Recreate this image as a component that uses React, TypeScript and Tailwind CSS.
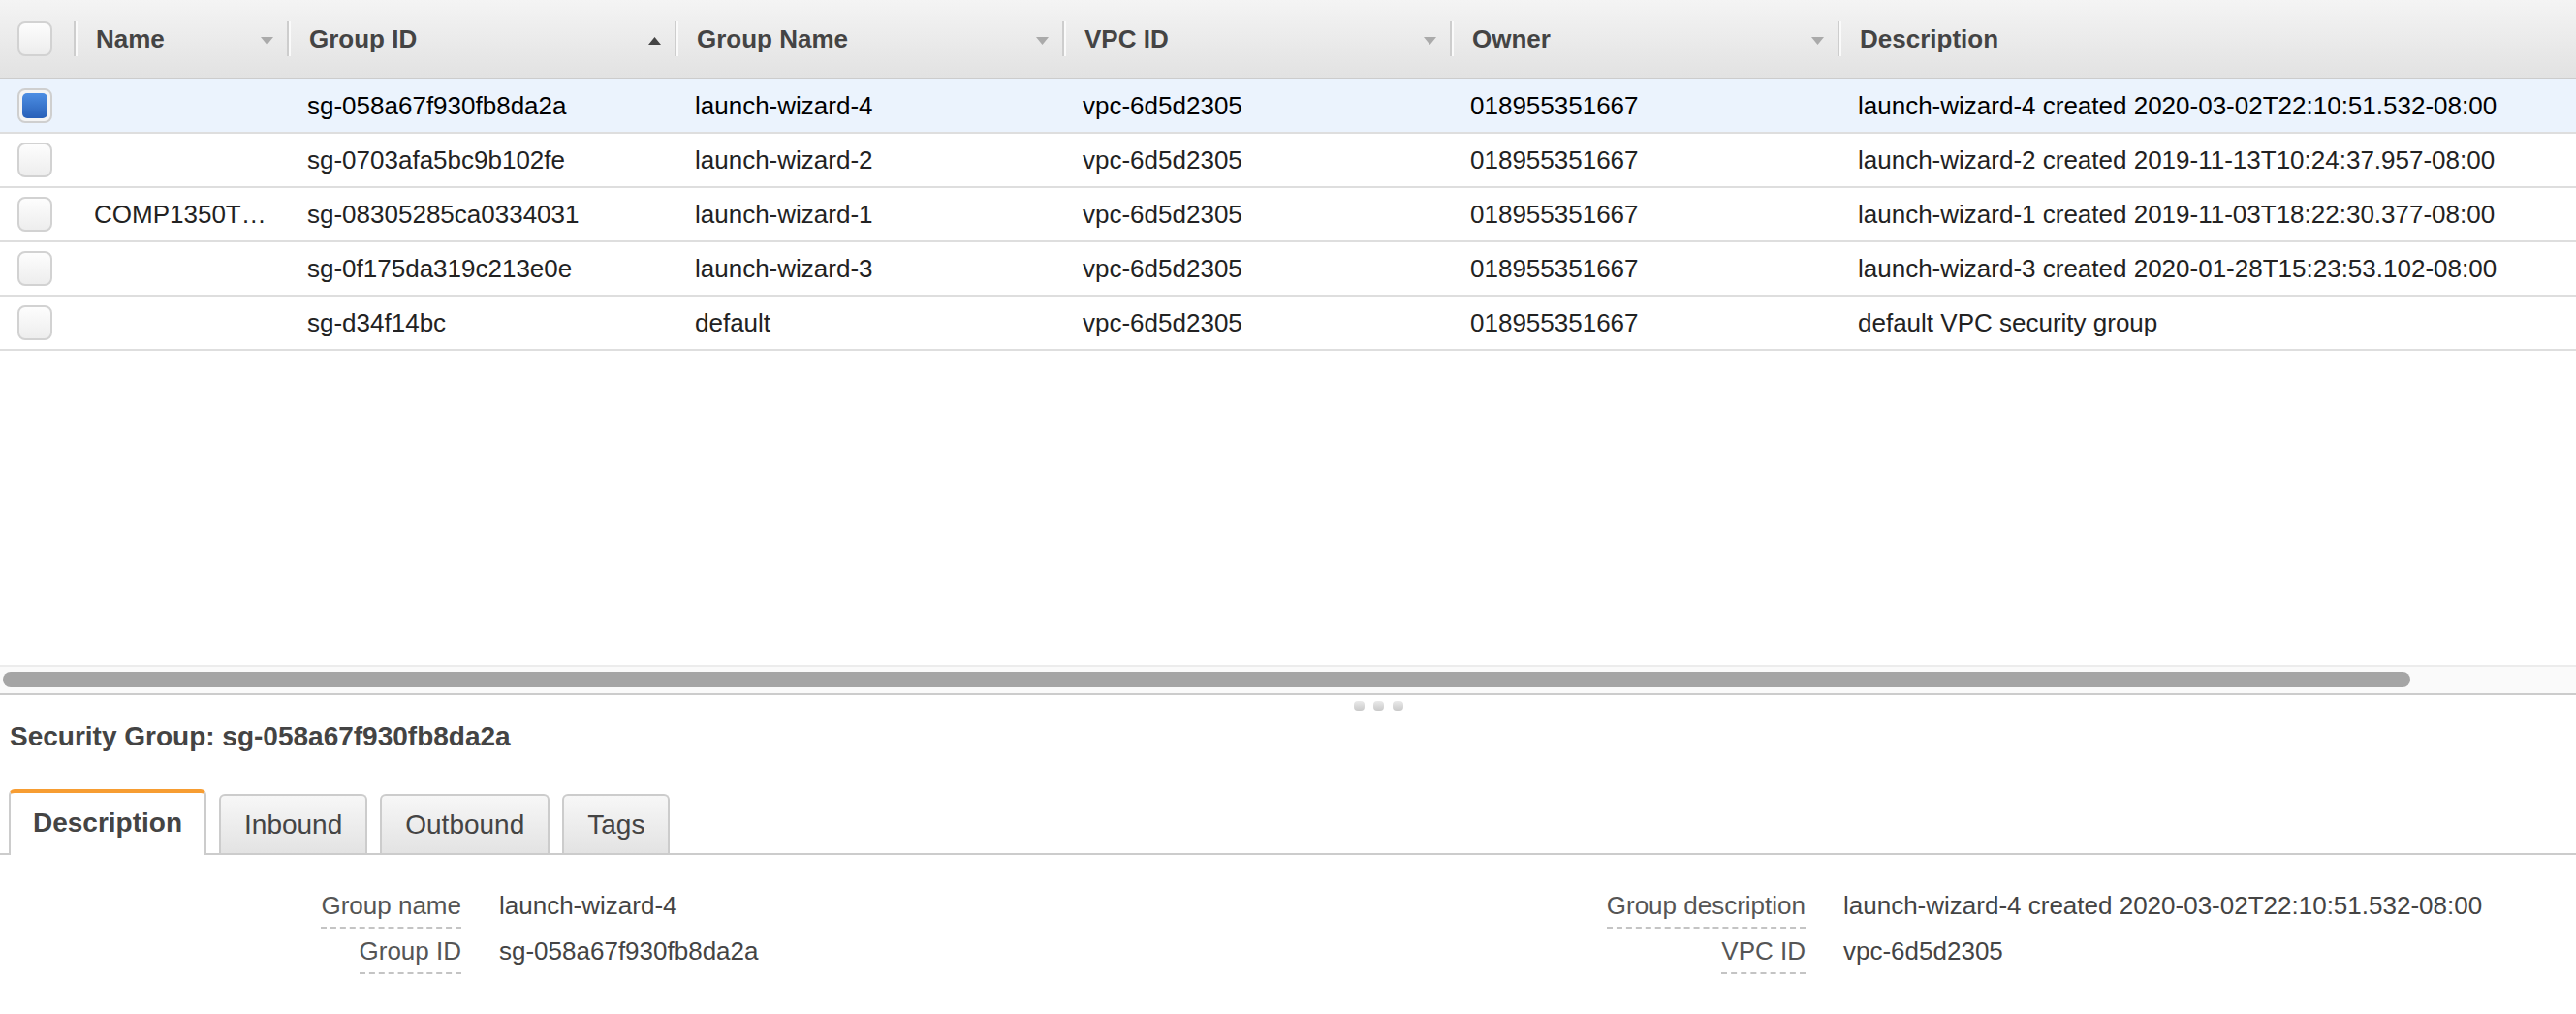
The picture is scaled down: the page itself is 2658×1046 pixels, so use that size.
import React from "react";

type Row = {
  name: string;
  id: string;
  gname: string;
  vpc: string;
  owner: string;
  desc: string;
  selected?: boolean;
};

const rows: Row[] = [
  {
    name: "",
    id: "sg-058a67f930fb8da2a",
    gname: "launch-wizard-4",
    vpc: "vpc-6d5d2305",
    owner: "018955351667",
    desc: "launch-wizard-4 created 2020-03-02T22:10:51.532-08:00",
    selected: true,
  },
  {
    name: "",
    id: "sg-0703afa5bc9b102fe",
    gname: "launch-wizard-2",
    vpc: "vpc-6d5d2305",
    owner: "018955351667",
    desc: "launch-wizard-2 created 2019-11-13T10:24:37.957-08:00",
  },
  {
    name: "COMP1350T…",
    id: "sg-08305285ca0334031",
    gname: "launch-wizard-1",
    vpc: "vpc-6d5d2305",
    owner: "018955351667",
    desc: "launch-wizard-1 created 2019-11-03T18:22:30.377-08:00",
  },
  {
    name: "",
    id: "sg-0f175da319c213e0e",
    gname: "launch-wizard-3",
    vpc: "vpc-6d5d2305",
    owner: "018955351667",
    desc: "launch-wizard-3 created 2020-01-28T15:23:53.102-08:00",
  },
  {
    name: "",
    id: "sg-d34f14bc",
    gname: "default",
    vpc: "vpc-6d5d2305",
    owner: "018955351667",
    desc: "default VPC security group",
  },
];

function Checkbox({ checked }: { checked?: boolean }) {
  if (checked) {
    return (
      <div className="w-[36px] h-[36px] rounded-[8px] border-2 border-[#cfcfcf] bg-[#f4f4f4] p-[3px]">
        <div className="w-full h-full rounded-[5px] bg-linear-to-b from-[#4d8ee3] to-[#2860b8]" />
      </div>
    );
  }
  return (
    <div className="w-[36px] h-[36px] rounded-[8px] border-2 border-[#d2d2d2] bg-linear-to-b from-[#fdfdfd] to-[#ededed]" />
  );
}

function Arrow({ up, dark }: { up?: boolean; dark?: boolean }) {
  return (
    <svg width="13" height="8" viewBox="0 0 13 8" className="mt-[3px]">
      {up ? (
        <path d="M0 8 L13 8 L6.5 0 Z" fill={dark ? "#444" : "#aaa"} />
      ) : (
        <path d="M0 0 L13 0 L6.5 8 Z" fill={dark ? "#444" : "#aaa"} />
      )}
    </svg>
  );
}

function HeadCol({
  label,
  w,
  arrow,
  up,
  dark,
}: {
  label: string;
  w: string;
  arrow?: boolean;
  up?: boolean;
  dark?: boolean;
}) {
  return (
    <div className={`${w} h-full flex items-center shrink-0`}>
      <div className="w-[2px] h-[36px] bg-[#cdcdcd] shadow-[2px_0_0_#fafafa]" />
      <div className="flex-1 pl-[21px] whitespace-nowrap overflow-hidden">{label}</div>
      {arrow && (
        <div className="mr-[14px] flex items-center">
          <Arrow up={up} dark={dark} />
        </div>
      )}
    </div>
  );
}

function Cell({ w, children }: { w: string; children: React.ReactNode }) {
  return (
    <div className={`${w} shrink-0 pl-[21px] whitespace-nowrap overflow-hidden`}>{children}</div>
  );
}

export default function App() {
  return (
    <div
      className="w-[2658px] h-[1046px] bg-white overflow-hidden flex flex-col text-[26px]"
      style={{ fontFamily: '"Liberation Sans", Arial, Helvetica, sans-serif' }}
    >
      {/* Table */}
      <div className="h-[686px] flex flex-col overflow-hidden">
        <div className="h-[82px] shrink-0 flex items-center bg-linear-to-b from-[#f4f4f4] to-[#e2e2e2] border-b-2 border-[#cccccc] font-bold text-[#444]">
          <div className="w-[76px] shrink-0 pl-[18px] flex items-center">
            <Checkbox />
          </div>
          <HeadCol label="Name" w="w-[220px]" arrow />
          <HeadCol label="Group ID" w="w-[400px]" arrow up dark />
          <HeadCol label="Group Name" w="w-[400px]" arrow />
          <HeadCol label="VPC ID" w="w-[400px]" arrow />
          <HeadCol label="Owner" w="w-[400px]" arrow />
          <HeadCol label="Description" w="flex-1" />
        </div>
        {rows.map((r, i) => (
          <div
            key={i}
            className={`h-[56px] shrink-0 flex items-center border-b-2 border-[#dedede] ${
              r.selected ? "bg-[#ebf3fd] text-[#000]" : "bg-white text-[#222]"
            }`}
          >
            <div className="w-[76px] shrink-0 pl-[18px] flex items-center">
              <Checkbox checked={r.selected} />
            </div>
            <Cell w="w-[220px]">{r.name}</Cell>
            <Cell w="w-[400px]">{r.id}</Cell>
            <Cell w="w-[400px]">{r.gname}</Cell>
            <Cell w="w-[400px]">{r.vpc}</Cell>
            <Cell w="w-[400px]">{r.owner}</Cell>
            <Cell w="flex-1">{r.desc}</Cell>
          </div>
        ))}
      </div>

      {/* Horizontal scrollbar */}
      <div className="h-[31px] shrink-0 border-t-2 border-[#ececec] border-b-2 border-b-[#cccccc] bg-[#fafafa] pt-[5px] pl-[3px]">
        <div className="w-[2484px] h-[16px] rounded-full bg-[#a5a5a5]" />
      </div>

      {/* Splitter handle */}
      <div className="h-[27px] shrink-0 flex pl-[1397px] pt-[6px] gap-[9px]">
        <div className="w-[11px] h-[10px] rounded-[4px] bg-linear-to-b from-[#eaeaea] to-[#c9c9c9]" />
        <div className="w-[11px] h-[10px] rounded-[4px] bg-linear-to-b from-[#eaeaea] to-[#c9c9c9]" />
        <div className="w-[11px] h-[10px] rounded-[4px] bg-linear-to-b from-[#eaeaea] to-[#c9c9c9]" />
      </div>

      {/* Details */}
      <div className="flex-1 flex flex-col">
        <div className="pl-[10px] h-[32px] leading-[32px] text-[28px] font-bold text-[#444]">
          Security Group: sg-058a67f930fb8da2a
        </div>

        <div className="mt-[38px] h-[68px] shrink-0 flex items-end gap-[13px] pl-[9px] border-b-2 border-[#cccccc] text-[28px] text-[#444]">
          <div className="relative -mb-[2px] h-[68px] px-[23px] pb-[2px] flex items-center border-2 border-b-0 border-[#cccccc] border-t-4 border-t-[#f79d32] bg-white rounded-t-[6px] font-bold">
            Description
          </div>
          <div className="h-[61px] px-[24px] flex items-center border-2 border-b-0 border-[#cccccc] rounded-t-[6px] bg-linear-to-b from-[#f7f7f7] to-[#e3e3e3]">
            Inbound
          </div>
          <div className="h-[61px] px-[24px] flex items-center border-2 border-b-0 border-[#cccccc] rounded-t-[6px] bg-linear-to-b from-[#f7f7f7] to-[#e3e3e3]">
            Outbound
          </div>
          <div className="h-[61px] px-[24px] flex items-center border-2 border-b-0 border-[#cccccc] rounded-t-[6px] bg-linear-to-b from-[#f7f7f7] to-[#e3e3e3]">
            Tags
          </div>
        </div>

        <div className="pt-[37px] flex text-[26px]">
          <div className="w-[1400px] shrink-0 flex flex-col gap-[8px]">
            <div className="flex">
              <div className="w-[476px] shrink-0 flex justify-end">
                <span className="leading-[30px] pb-[7px] border-b-2 border-dashed border-[#c4c4c4] text-[#555]">
                  Group name
                </span>
              </div>
              <div className="ml-[39px] leading-[30px] text-[#444]">launch-wizard-4</div>
            </div>
            <div className="flex">
              <div className="w-[476px] shrink-0 flex justify-end">
                <span className="leading-[30px] pb-[7px] border-b-2 border-dashed border-[#c4c4c4] text-[#555]">
                  Group ID
                </span>
              </div>
              <div className="ml-[39px] leading-[30px] text-[#444]">sg-058a67f930fb8da2a</div>
            </div>
          </div>
          <div className="flex-1 flex flex-col gap-[8px]">
            <div className="flex">
              <div className="w-[463px] shrink-0 flex justify-end">
                <span className="leading-[30px] pb-[7px] border-b-2 border-dashed border-[#c4c4c4] text-[#555]">
                  Group description
                </span>
              </div>
              <div className="ml-[39px] leading-[30px] text-[#444] whitespace-nowrap">
                launch-wizard-4 created 2020-03-02T22:10:51.532-08:00
              </div>
            </div>
            <div className="flex">
              <div className="w-[463px] shrink-0 flex justify-end">
                <span className="leading-[30px] pb-[7px] border-b-2 border-dashed border-[#c4c4c4] text-[#555]">
                  VPC ID
                </span>
              </div>
              <div className="ml-[39px] leading-[30px] text-[#444]">vpc-6d5d2305</div>
            </div>
          </div>
        </div>
      </div>
    </div>
  );
}
